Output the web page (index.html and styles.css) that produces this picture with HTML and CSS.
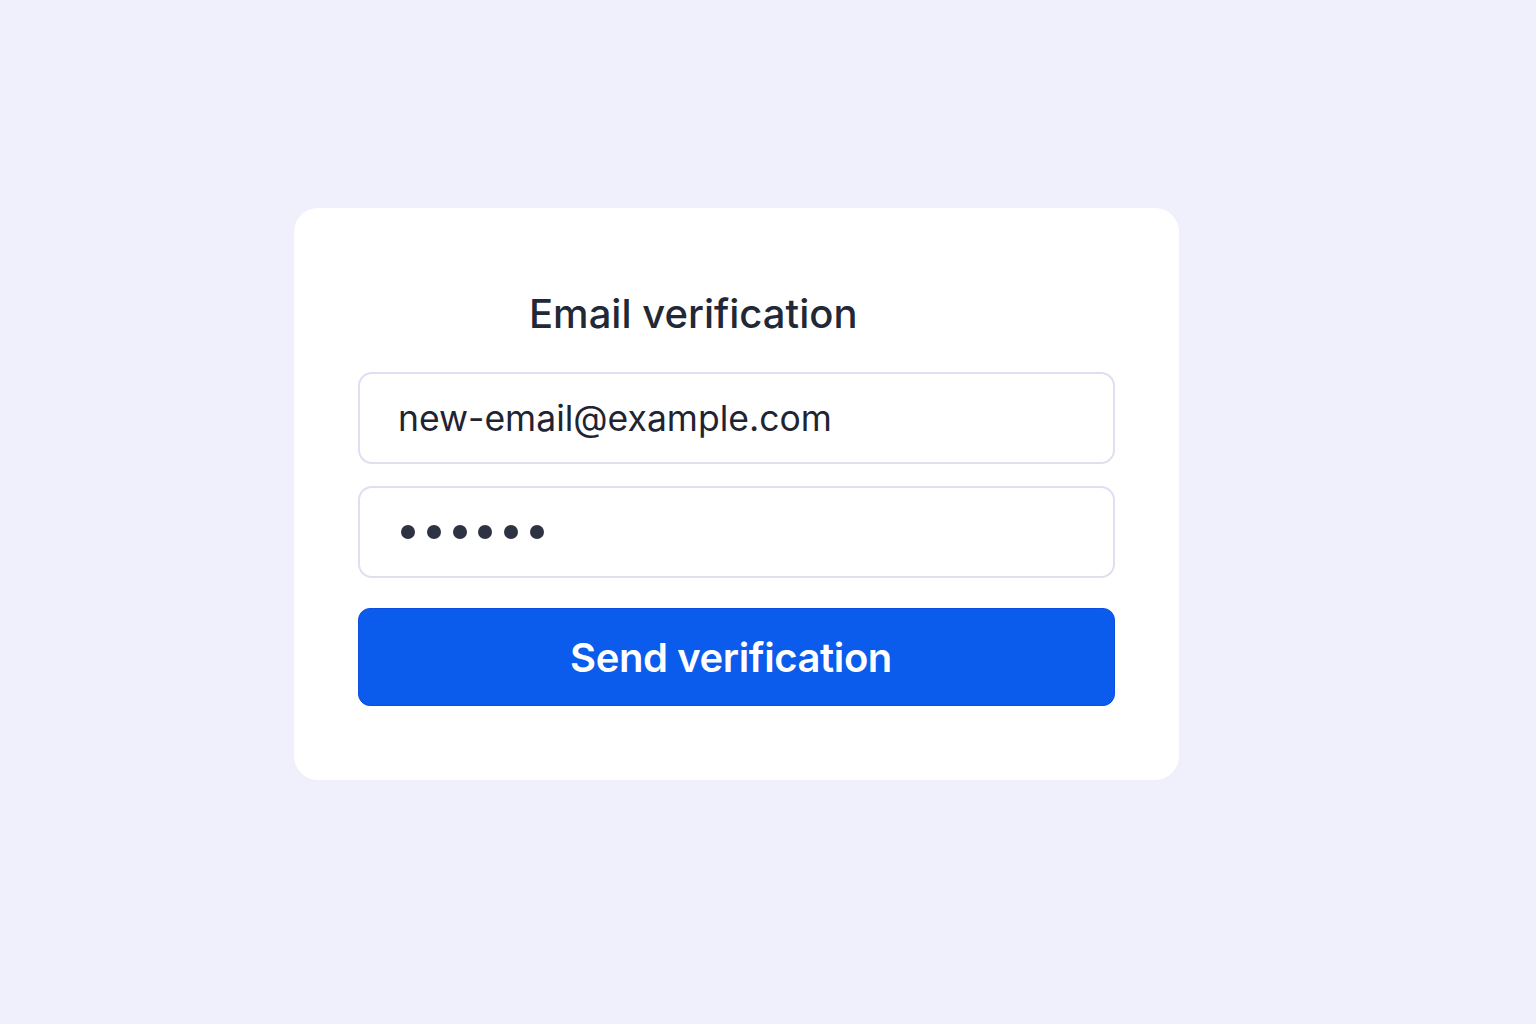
FILE: index.html
```html
<!DOCTYPE html>
<html lang="en">
<head>
  <meta charset="UTF-8" />
  <title>Email verification</title>
  <link rel="stylesheet" href="styles.css">
</head>
<body>
  <main class="page">
    <div class="card">
      <h1 class="card-title">Email verification</h1>
      <div class="field">new-email@example.com</div>
      <div class="field field-password">
        <span class="dot"></span><span class="dot"></span><span class="dot"></span>
        <span class="dot"></span><span class="dot"></span><span class="dot"></span>
      </div>
      <button class="send-btn">Send verification</button>
    </div>
  </main>
</body>
</html>
```

FILE: styles.css
```css
body {
  margin: 0;
  padding: 0;
  font-family: 'Inter', 'Noto Sans', sans-serif;
  background-color: #f0effc;
  color: #1f2433;
}

.page {
  padding: 208px 0 0 294px;
}

.card {
  width: 885px;
  height: 572px;
  box-sizing: border-box;
  padding: 82px 64px 0;
  background-color: #ffffff;
  border-radius: 24px;
}

.card-title {
  margin: 0 0 34px 171px;
  font-size: 40px;
  font-weight: 500;
  line-height: 48px;
  color: #232836;
}

.field {
  display: flex;
  align-items: center;
  height: 92px;
  box-sizing: border-box;
  padding: 0 38px;
  margin-bottom: 22px;
  border: 2px solid #e1def0;
  border-radius: 14px;
  font-size: 35.5px;
  color: #1f2433;
}

.field-password {
  gap: 11.8px;
  padding-left: 41px;
  margin-bottom: 30px;
}

.dot {
  width: 14px;
  height: 14px;
  border-radius: 50%;
  background-color: #2d3342;
}

.send-btn {
  display: block;
  width: 100%;
  height: 98px;
  padding: 0 11px 0 0;
  border: 1px solid #0a4fe0;
  border-radius: 12px;
  background-color: #0b5ced;
  color: #ffffff;
  font-family: 'Inter', sans-serif;
  font-size: 40px;
  font-weight: 600;
  letter-spacing: -0.4px;
  cursor: pointer;
}
```
